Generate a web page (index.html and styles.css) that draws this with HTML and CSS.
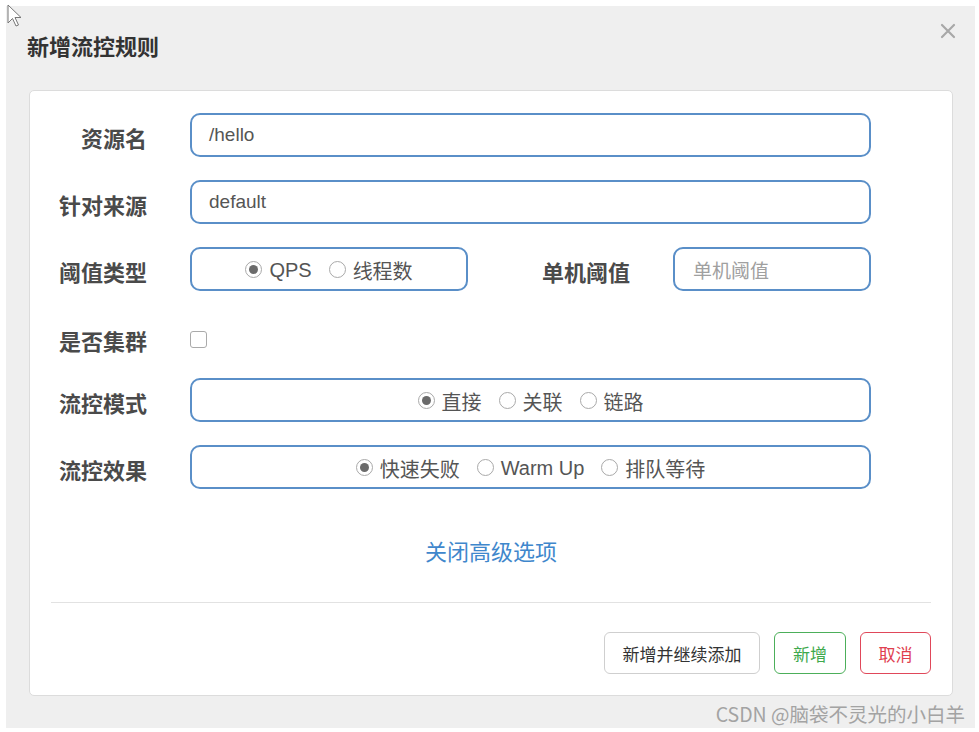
FILE: index.html
```html
<!DOCTYPE html>
<html lang="zh-CN">
<head>
<meta charset="utf-8">
<title>新增流控规则</title>
<link rel="stylesheet" href="styles.css">
</head>
<body>
<svg class="cursor" width="16" height="24" viewBox="0 0 16 24"><path d="M1 1 L1 19 L5.5 14.5 L9 22 L11.5 21 L8 13.5 L14 13.5 Z" fill="#fff" stroke="#777" stroke-width="1"/></svg>
<div class="modal">
  <div class="modal-header">
    <h4 class="modal-title">新增流控规则</h4>
    <svg class="close" width="16" height="16" viewBox="0 0 16 16"><path d="M2 2 L14 14 M14 2 L2 14" stroke="#a8a8a8" stroke-width="2.2" stroke-linecap="round"/></svg>
  </div>
  <div class="card">
    <div class="form">
      <div class="row">
        <label class="lbl">资源名</label>
        <div class="field wide"><span class="val">/hello</span></div>
      </div>
      <div class="row">
        <label class="lbl">针对来源</label>
        <div class="field wide"><span class="val">default</span></div>
      </div>
      <div class="row">
        <label class="lbl">阈值类型</label>
        <div class="field group small">
          <span class="radio checked"></span><span class="opt">QPS</span>
          <span class="radio"></span><span class="opt">线程数</span>
        </div>
        <label class="lbl lbl2">单机阈值</label>
        <div class="field single"><span class="ph">单机阈值</span></div>
      </div>
      <div class="row check-row">
        <label class="lbl">是否集群</label>
        <span class="checkbox"></span>
      </div>
      <div class="row">
        <label class="lbl">流控模式</label>
        <div class="field group wide">
          <span class="radio checked"></span><span class="opt">直接</span>
          <span class="radio"></span><span class="opt">关联</span>
          <span class="radio"></span><span class="opt">链路</span>
        </div>
      </div>
      <div class="row">
        <label class="lbl">流控效果</label>
        <div class="field group wide">
          <span class="radio checked"></span><span class="opt">快速失败</span>
          <span class="radio"></span><span class="opt">Warm Up</span>
          <span class="radio"></span><span class="opt">排队等待</span>
        </div>
      </div>
    </div>
    <div class="adv"><a class="adv-link">关闭高级选项</a></div>
    <div class="divider"></div>
    <div class="footer">
      <button class="btn">新增并继续添加</button>
      <button class="btn btn-ok">新增</button>
      <button class="btn btn-cancel">取消</button>
    </div>
  </div>
</div>
<div class="watermark">CSDN @脑袋不灵光的小白羊</div>
</body>
</html>
```
FILE: styles.css
```css
* { box-sizing: border-box; }
html, body { margin: 0; padding: 0; background: #fff; }
body {
  font-family: "Liberation Sans", "Noto Sans CJK SC", sans-serif;
  width: 979px;
  height: 732px;
  overflow: hidden;
  position: relative;
}
.cursor { position: absolute; left: 7px; top: 4px; z-index: 5; }
.modal {
  margin: 6px 4px 4px 6px;
  height: 722px;
  background: #efefef;
  position: relative;
}
.modal-header {
  padding: 26px 0 0 21px;
  height: 84px;
  position: relative;
}
.modal-title {
  margin: 0;
  font-size: 22px;
  line-height: 26px;
  font-weight: bold;
  color: #333;
  font-family: "Noto Sans CJK SC", sans-serif;
}
.close { position: absolute; right: 19px; top: 17px; }
.card {
  margin: 0 22px 0 23px;
  height: 606px;
  background: #fff;
  border: 1px solid #dcdcdc;
  border-radius: 5px;
}
.form { padding: 22px 81px 1px 19px; }
.row {
  display: flex;
  align-items: center;
  height: 44px;
  margin-bottom: 23px;
}
.row:last-child { margin-bottom: 0; }
.lbl {
  width: 98px;
  flex: none;
  text-align: right;
  font-family: "Noto Sans CJK SC", sans-serif;
  font-weight: bold;
  font-size: 22px;
  color: #4a4a4a;
  margin-right: 43px;
  padding-top: 3px;
}
.lbl2 { width: 162px; }
.field {
  height: 44px;
  border: 2px solid #5a8fc8;
  border-radius: 10px;
  display: flex;
  align-items: center;
  font-size: 18px;
  color: #555;
  background: #fff;
}
.wide { flex: 1; padding: 0 17px; }
.small { width: 278px; flex: none; }
.single { width: 198px; flex: none; padding: 0 18px; }
.val { font-family: "Liberation Sans", sans-serif; font-size: 19px; color: #555; }
.ph { font-family: "Noto Sans CJK SC", sans-serif; font-size: 19px; color: #a0a0a0; }
.group { justify-content: center; }
.group.wide { padding: 0; }
.radio {
  width: 17px;
  height: 17px;
  border: 1px solid #a9a9a9;
  border-radius: 50%;
  background: #fff;
  flex: none;
  margin-right: 7px;
  position: relative;
}
.radio.checked::after {
  content: "";
  position: absolute;
  left: 3px; top: 3px;
  width: 9px; height: 9px;
  border-radius: 50%;
  background: #6b6b6b;
}
.opt {
  font-family: "Liberation Sans", "Noto Sans CJK SC", sans-serif;
  font-size: 20px;
  color: #555;
  margin-right: 17px;
  padding-top: 3px;
}
.opt:last-child { margin-right: 0; }
.check-row { height: 41px; padding-top: 8px; }
.checkbox {
  width: 17px;
  height: 17px;
  border: 1px solid #aaa;
  border-radius: 3px;
  background: #fff;
  margin-top: 2px;
}
.adv {
  text-align: center;
  margin-top: 45px;
  height: 30px;
  line-height: 30px;
}
.adv-link {
  font-family: "Noto Sans CJK SC", sans-serif;
  font-size: 22px;
  color: #3f87cc;
}
.divider {
  margin: 37px 21px 0 21px;
  border-top: 1px solid #e2e2e2;
}
.footer {
  display: flex;
  justify-content: flex-end;
  gap: 14px;
  padding: 29px 21px 0 21px;
}
.btn {
  height: 42px;
  padding: 0 10px;
  font-family: "Noto Sans CJK SC", sans-serif;
  font-size: 17px;
  color: #333;
  background: #fff;
  border: 1.5px solid #cfcfcf;
  border-radius: 6px;
}
.btn:first-child { width: 156px; }
.btn-ok { width: 72px; color: #3ea94d; border: 1.5px solid #4caf5a; }
.btn-cancel { width: 71px; color: #e0404f; border: 1.5px solid #e0485a; }
.watermark {
  position: absolute;
  right: 14px;
  bottom: 4px;
  font-family: "Noto Sans CJK SC", sans-serif;
  font-size: 19.5px;
  color: #a3a3a3;
}
```
